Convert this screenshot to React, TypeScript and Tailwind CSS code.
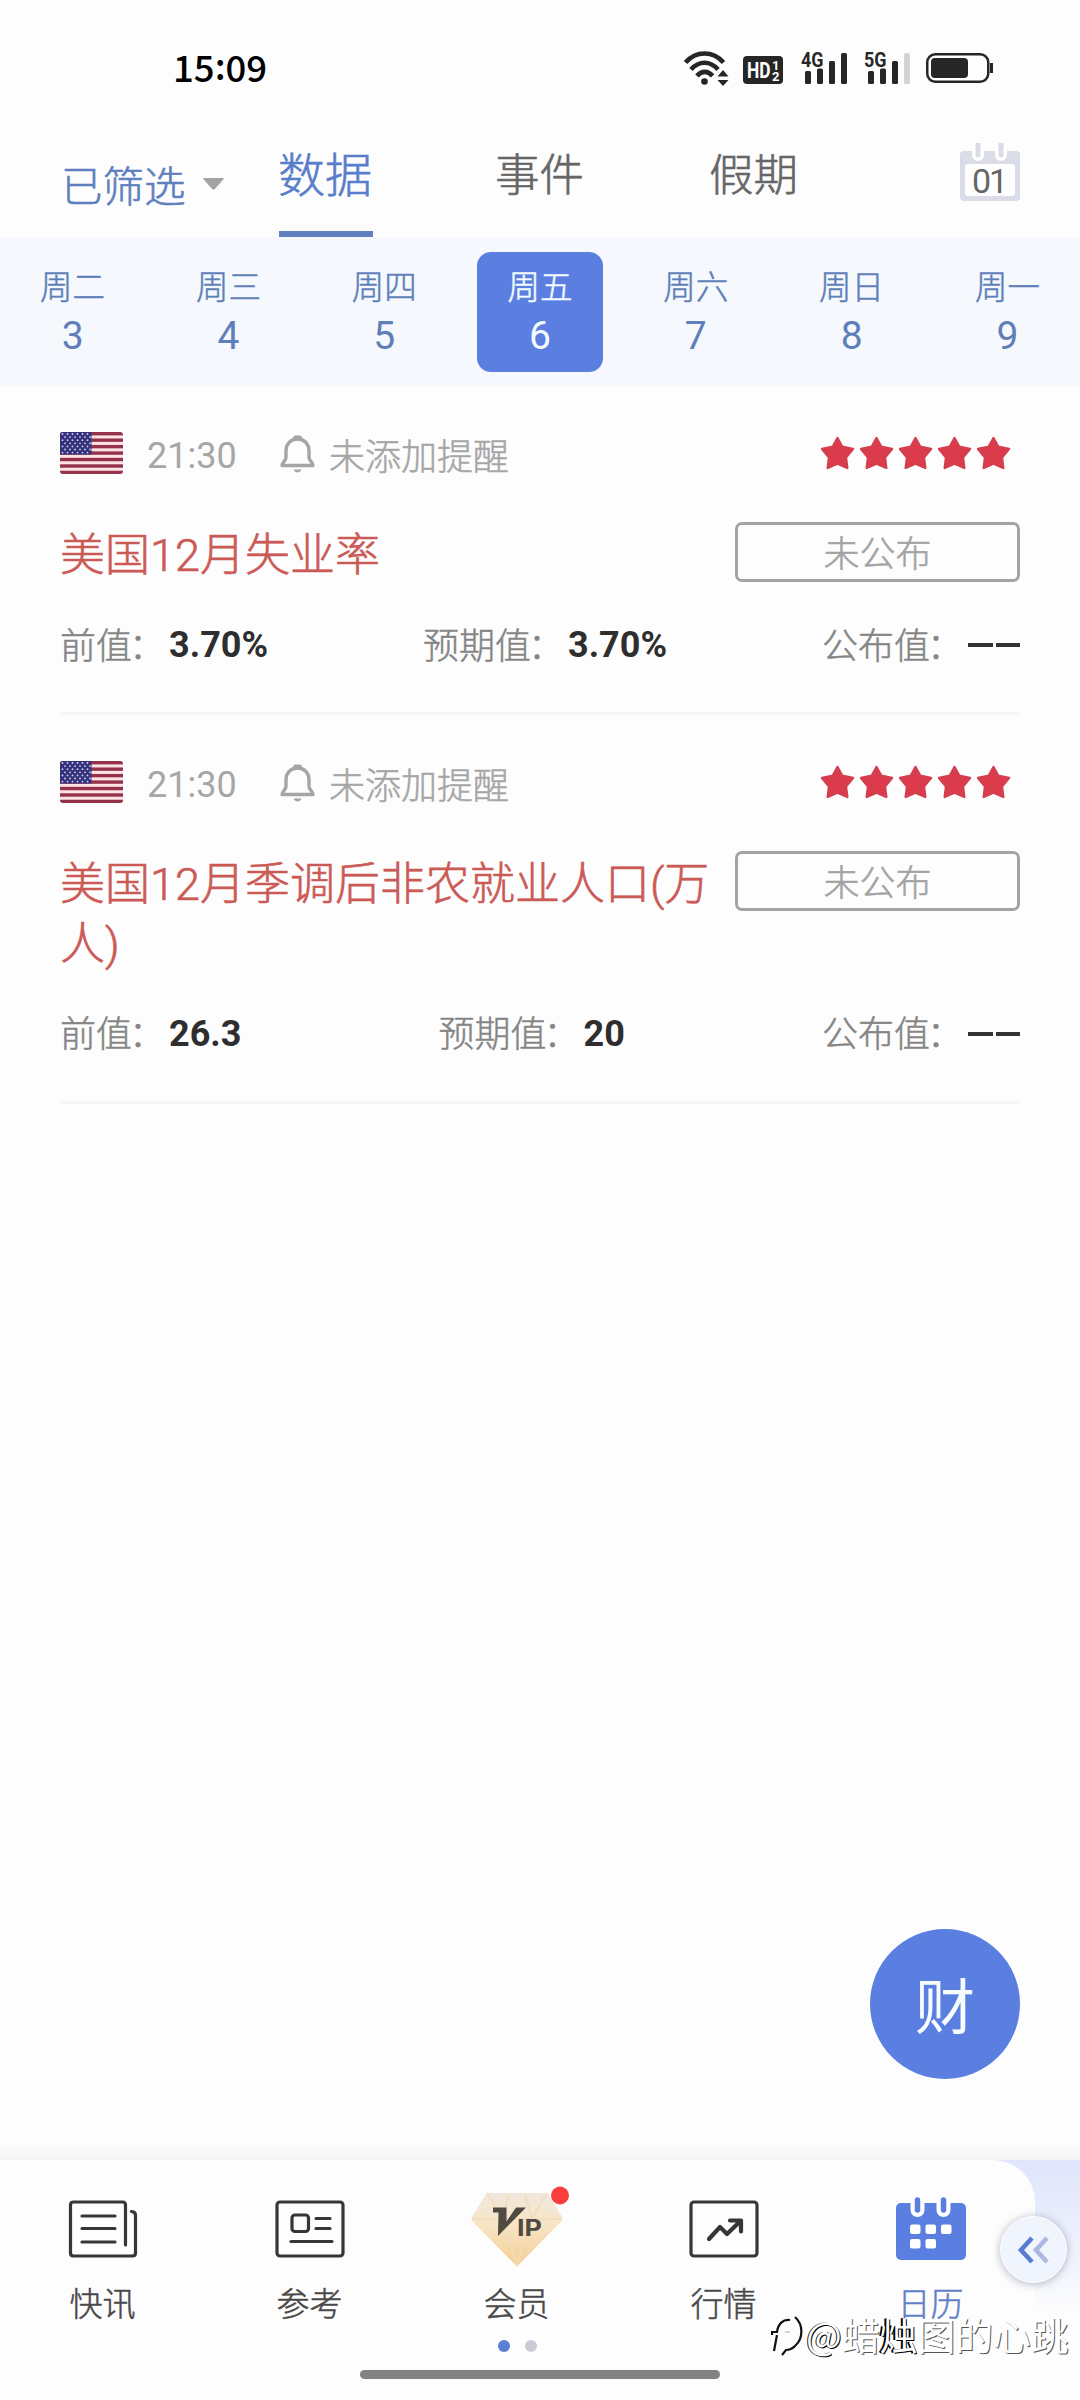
import React from "react";

const days = [
  { w: "周二", d: "3" },
  { w: "周三", d: "4" },
  { w: "周四", d: "5" },
  { w: "周五", d: "6", on: true },
  { w: "周六", d: "7" },
  { w: "周日", d: "8" },
  { w: "周一", d: "9" },
];

const events = [
  { title: "美国12月失业率", prev: "3.70%", forecast: "3.70%" },
  { title: "美国12月季调后非农就业人口(万人)", prev: "26.3", forecast: "20" },
];

function Signal({ label, weak }: { label: string; weak?: boolean }) {
  return (
    <svg className="overflow-visible" width="47" height="34" viewBox="0 0 47 34" fill="#262626">
      <text x="0" y="15.5" fontFamily="Roboto" fontWeight="700" fontSize="20.500" textLength="22.500" lengthAdjust="spacingAndGlyphs">
        {label}
      </text>
      <rect x="4" y="20" width="6" height="13" rx="1.5" />
      <rect x="16" y="17.500" width="6" height="15.500" rx="1.5" />
      <rect x="28" y="10" width="6" height="23" rx="1.5" />
      <rect x="40" y="2" width="6" height="31" rx="1.5" fill={weak ? "#d4d4d4" : "#262626"} />
    </svg>
  );
}

function StatusBar() {
  return (
    <div className="flex h-[137px] shrink-0 items-start">
      <div className="ml-[173px] mt-[46px] w-[95px] whitespace-nowrap text-[36.500px] font-medium leading-[42px] text-black">
        15<span className="relative -top-[2px]">:</span>09
      </div>
      <svg className="ml-[415px] mt-[50px]" width="46" height="36" viewBox="0 0 46 36" fill="none" stroke="#262626" strokeWidth="4.6">
        <path d="M2.5 12.5C13 .5 30 .5 40.500 12.500" />
        <path d="M8 19.500C16 10.500 27 10.500 35 19.500" />
        <path d="M14 26C18.500 20.500 25 20.500 29.500 26" />
        <circle cx="21.500" cy="31.500" r="3.300" fill="#262626" stroke="none" />
        <path d="M40 20l5.500 6.500h-11zM40 36l5.500-6h-11z" fill="#262626" stroke="none" />
      </svg>
      <svg className="ml-[14px] mt-[56px]" width="40" height="28" viewBox="0 0 40 28" fill="#fff" fontFamily="Roboto" fontWeight="700">
        <rect width="40" height="28" rx="4" fill="#262626" />
        <text x="4" y="22" fontSize="22" textLength="23.500" lengthAdjust="spacingAndGlyphs">HD</text>
        <text x="29" y="13.500" fontSize="13">1</text>
        <text x="29" y="25" fontSize="13">2</text>
      </svg>
      <div className="ml-[18px] mt-[51px]"><Signal label="4G" /></div>
      <div className="ml-[16px] mt-[51px]"><Signal label="5G" weak /></div>
      <svg className="ml-[15px] mt-[53px]" width="67" height="30" viewBox="0 0 67 30" fill="none">
        <rect x="1.250" y="1.250" width="61" height="27.500" rx="8" stroke="#262626" strokeWidth="2.500" />
        <rect x="5" y="5" width="37" height="20" rx="4" fill="#262626" />
        <path d="M65.500 10v10" stroke="#262626" strokeWidth="3" />
      </svg>
    </div>
  );
}

function Header() {
  return (
    <div className="flex h-[100px] shrink-0 items-start whitespace-nowrap font-light [-webkit-text-stroke:0.600px]">
      <div className="flex w-[279px] items-center pl-[61px] pt-[22px]">
        <span className="text-[41.500px] leading-[50px] text-[#5f80be]">已筛选</span>
        <svg className="ml-[17px]" width="21" height="12" viewBox="0 0 21 12"><path d="M1.500 0h18q2 0 .8 1.500l-8.500 9.500q-1.300 1.500-2.600 0L.7 1.500Q-.5 0 1.500 0z" fill="#a3a3a3" /></svg>
      </div>
      <div className="flex h-[100px] w-[94px] flex-col justify-between border-b-[6px] border-[#6280bd] pt-[5px] text-[47px] leading-[60px] text-[#587dca]"><span className="-ml-px">数据</span></div>
      <div className="ml-[122px] w-[89px] pt-[5px] text-[44.500px] leading-[60px] text-[#666]">事件</div>
      <div className="ml-[125px] w-[89px] pt-[5px] text-[44.500px] leading-[60px] text-[#666]">假期</div>
      <svg className="ml-[161px] mt-[6px] [-webkit-text-stroke:0]" width="62" height="60" viewBox="0 0 62 60">
        <rect x="1" y="8" width="60" height="50" rx="4" fill="#dadde8" />
        <rect x="6" y="21" width="50" height="32" rx="3" fill="#fff" />
        <path d="M19 1v11M42 1v11" stroke="#fff" strokeWidth="12" strokeLinecap="round" />
        <path d="M19 1v11M42 1v11" stroke="#dadbe4" strokeWidth="5" strokeLinecap="round" />
        <text x="31" y="50" textAnchor="middle" fontFamily="Roboto" fontWeight="400" fontSize="34" textLength="36" fill="#666">01</text>
      </svg>
    </div>
  );
}

function Flag() {
  return (
    <svg className="rounded-[3px]" width="63" height="42" viewBox="0 0 63 42">
      <rect width="63" height="42" fill="#fbe3e6" />
      {[0, 1, 2, 3, 4, 5, 6].map((i) => (
        <rect key={i} y={i * 6.46} width="63" height="3.400" fill="#95324a" />
      ))}
      <rect width="31.500" height="22.500" fill="#34327c" />
      {[0, 1, 2, 3, 4, 5, 6].map((r) =>
        [0, 1, 2, 3, 4, 5].map((c) => (
          <circle key={`${r}-${c}`} cx={2.500 + c * 5 + (r % 2) * 2.500} cy={2 + r * 3.100} r=".9" fill="#d4d3ea" />
        ))
      )}
    </svg>
  );
}

function Value({ label, value }: { label: string; value: string }) {
  return (
    <div className="flex items-center text-[36px] leading-[42px]">
      <span className="-mt-[3px] font-light text-[#858585] [-webkit-text-stroke:0.500px]">
        {label}
        <span className="relative -left-[3px]">：</span>
      </span>
      {value ? (
        <span className="ml-px mt-[2px] font-[Roboto] font-bold text-[#2e2e2e]">{value}</span>
      ) : (
        <span className="ml-[2px] mt-[2px] flex h-[4px] w-[52px] gap-[3px]" aria-label="--">
          <i className="flex-1 bg-[#333]" />
          <i className="flex-1 bg-[#333]" />
        </span>
      )}
    </div>
  );
}

function EventCard({ title, prev, forecast }: { title: string; prev: string; forecast: string }) {
  return (
    <div className="mx-[60px] border-b-[3px] border-[#f5f5f5] pb-[47px] pt-[46px]">
      <div className="flex h-[42px] items-center text-[36px] leading-[42px] text-[#a6a6a6]">
        <Flag />
        <span className="ml-[24px] mt-[5px] w-[91px] font-[Roboto]">21:30</span>
        <svg className="ml-[42px] mt-[2px]" width="35" height="38" viewBox="0 0 35 38" fill="none" stroke="#a5a5a5" strokeWidth="3.400" strokeLinejoin="round">
          <path d="M17.500 4C10.500 4 6 9 6 16v6.500c0 3-4 5-4 8h31c0-3-4-5-4-8V16C29 9 24.500 4 17.500 4z" />
          <path d="M15 2.200h5" strokeLinecap="round" />
          <path d="M13.500 34.500c1.500 4 6.500 4 8 0z" fill="#a5a5a5" stroke="none" />
        </svg>
        <span className="ml-[14px] mt-[1px] font-light [-webkit-text-stroke:0.500px]">未添加提醒</span>
        <div className="ml-auto mr-[9px] flex gap-[5px]">
          {[0, 1, 2, 3, 4].map((i) => (
            <svg key={i} width="34" height="34" viewBox="0 0 34 34">
              <path d="M16.500 2l4.700 8.600 10.800 2.400-7 8.400 1.300 10.600-9.800-4.400-9.800 4.400L8 21.400 1 13l10.800-2.400z" fill="#dc3b4b" stroke="#d43f50" strokeWidth="2.400" strokeLinejoin="round" />
            </svg>
          ))}
        </div>
      </div>
      <div className="mt-[48px] flex items-start justify-between">
        <div className="w-[660px] break-all pt-[4px] font-[Roboto,'Noto_Sans_CJK_SC',sans-serif] text-[45px] font-light leading-[59.500px] text-[#cb5a56] [-webkit-text-stroke:0.600px]">{title}</div>
        <div className="h-[60px] w-[285px] rounded-[7px] border-[3px] border-[#a3a3a3] text-center text-[36px] font-light leading-[53px] text-[#a3a3a3] [-webkit-text-stroke:0.500px]">未公布</div>
      </div>
      <div className="mt-[37.500px] flex h-[42px] items-center justify-between">
        <Value label="前值" value={prev} />
        <Value label="预期值" value={forecast} />
        <Value label="公布值" value="" />
      </div>
    </div>
  );
}

function NavItem({ label, active, children }: { label: string; active?: boolean; children: React.ReactNode }) {
  return (
    <div className="flex w-[207px] flex-col items-center">
      <div className="flex h-[76px] items-center justify-center">{children}</div>
      <span className={active ? "mt-[11px] text-[33px] leading-[48px] text-[#5f80c8] [-webkit-text-stroke:0.500px]" : "mt-[11px] text-[33px] leading-[48px] text-[#484848] [-webkit-text-stroke:0.500px]"}>{label}</span>
    </div>
  );
}

function BottomNav() {
  return (
    <div className="relative h-[240px] shrink-0 bg-gradient-to-b from-[#dfe5fb] via-[#f0f3fd] via-40% to-[#fdfdfd] to-65%">
      <div className="h-[240px] w-[1035px] rounded-tr-[42px] bg-[#fdfdfd] pt-[31px]">
        <div className="-ml-px flex font-light">
          <NavItem label="快讯">
            <svg width="70" height="58" viewBox="0 0 70 58" fill="none" stroke="#363636" strokeWidth="3.200" strokeLinecap="round" strokeLinejoin="round">
              <path d="M57.500 45V5q0-3-3-3h-49q-3 0-3 3v48q0 3 3 3h59q3 0 3-3V15q0-3-4-3.500" />
              <path d="M14 16h33M14 28.500h33M14 42h33" />
            </svg>
          </NavItem>
          <NavItem label="参考">
            <svg width="70" height="58" viewBox="0 0 70 58" fill="none" stroke="#363636" strokeWidth="3.200" strokeLinecap="round">
              <rect x="2" y="2" width="66" height="54" rx="3" />
              <rect x="17" y="15" width="16.500" height="16.500" rx="3" />
              <path d="M41 18.500h14M41 28.500h14M16 41.500h41" />
            </svg>
          </NavItem>
          <NavItem label="会员">
            <svg className="overflow-visible" width="92" height="76" viewBox="0 0 92 76">
              <defs>
                <linearGradient id="gem" x1="0" y1="0" x2="0" y2="1">
                  <stop offset="0" stopColor="#f0e8de" />
                  <stop offset=".4" stopColor="#f7e5c8" />
                  <stop offset="1" stopColor="#f5cf92" />
                </linearGradient>
              </defs>
              <path d="M18 2h57q2 0 3 2l13 22q1 2-.5 4L47 74.500q-1 1-2 0L1.200 30Q0 28 1 26L14.500 4Q16 2 18 2z" fill="url(#gem)" />
              <path d="M1 28h90M16 2l15 26 15 46 15-46L76 2M31 28L38 3M61 28L54 3" stroke="#f3dcb8" strokeWidth="2" fill="none" opacity=".8" />
              <path d="M22 16.500h13.500v14L45 16.500h10L27 45l.5-23.500H22z" fill="#504a42" />
              <text x="46" y="45" fontFamily="Inter" fontWeight="700" fontSize="23" textLength="25" lengthAdjust="spacingAndGlyphs" fill="#504a42">IP</text>
              <circle cx="89" cy="4.500" r="9" fill="#fa3e3d" />
            </svg>
          </NavItem>
          <NavItem label="行情">
            <svg width="70" height="58" viewBox="0 0 70 58" fill="none" stroke="#363636" strokeLinecap="round" strokeLinejoin="round">
              <rect x="2" y="2" width="66" height="54" rx="3" strokeWidth="3.200" />
              <path d="M20 39l11-12 7 7 13.500-13M41 20.500h11v11" strokeWidth="4.200" />
            </svg>
          </NavItem>
          <NavItem label="日历" active>
            <svg className="ml-px" width="70" height="64" viewBox="0 0 70 64">
              <rect y="6" width="70" height="57" rx="5" fill="#5a7fe0" />
              <path d="M21.500 4v9M47.500 4v9" stroke="#fff" strokeWidth="14" strokeLinecap="round" />
              <path d="M21.500 3v10M47.500 3v10" stroke="#5a7fe0" strokeWidth="5.500" strokeLinecap="round" />
              {[14, 29.5, 45].map((x) => <rect key={x} x={x} y="27.500" width="10.500" height="9.500" rx="2" fill="#fff" />)}
              {[14, 29.5].map((x) => <rect key={x} x={x} y="42" width="10.500" height="9.500" rx="2" fill="#fff" />)}
            </svg>
          </NavItem>
        </div>
        <div className="ml-[498px] mt-[14px] flex gap-[15px]">
          <i className="h-3 w-3 rounded-full bg-[#5a7fd6]" />
          <i className="h-3 w-3 rounded-full bg-[#cbcad6]" />
        </div>
        <div className="ml-[360px] mt-[18px] h-[9px] w-[360px] rounded-full bg-[#828282]" />
      </div>

      <div className="absolute left-[1000px] top-[56px] flex h-[67px] w-[67px] items-center justify-center rounded-full border border-white bg-[#f0f4fc] shadow-[0_1px_8px_rgba(90,95,125,0.45)]">
        <svg className="-ml-[2px]" width="32" height="28" viewBox="0 0 32 28" fill="none" strokeWidth="4.600">
          <path d="M15 2L4 14l11 12" stroke="#587dd2" />
          <path d="M30 2L19 14l11 12" stroke="#aab8e2" />
        </svg>
      </div>

      <div className="absolute left-[771px] top-[147px] flex items-center whitespace-nowrap text-[37.800px] font-normal leading-[54px] text-white [text-shadow:1px_1px_0_#555]">
        <svg className="mt-[4px]" width="35" height="42" viewBox="0 0 35 42" fill="none" stroke="#111" strokeWidth="2.200">
          <path d="M3 36l3-16M1 20v-3h5C7 9 12 4 19 5" />
          <path d="M24 2c8 7 9 21 0 29-3 3-6 4-9 4l-4 5" />
          <path d="M14 17h5" stroke="#aaa" strokeWidth="1" />
        </svg>
        <span className="[text-shadow:1px_1px_0_#000,-1px_0_0_#222]">@</span>
        <span>蜡</span>
        <span className="[text-shadow:-2px_0_0_#000,1px_1px_0_#000]">烛</span>
        <span>图的心跳</span>
      </div>
    </div>
  );
}

export default function App() {
  return (
    <div className="flex h-[2400px] w-[1080px] flex-col overflow-hidden bg-[#fdfdfd] font-['Noto_Sans_CJK_SC',sans-serif]">
      <StatusBar />
      <Header />
      <div className="flex h-[149px] shrink-0 justify-center bg-[#f5f9fe] pt-[15px]">
        {days.map(({ w, d, on }) => (
          <div key={w} className="flex w-[155.800px] shrink-0 justify-center">
            <div className={on ? "flex h-[120px] w-[126px] flex-col items-center rounded-[14px] bg-[#5a7fe0] pt-[10px] text-[#f4fbff]" : "flex h-[120px] w-[126px] flex-col items-center pt-[10px] text-[#5f7fb8]"}>
              <span className="text-[32.500px] font-light leading-[46px] [-webkit-text-stroke:0.500px]">{w}</span>
              <span className="mt-[5px] font-[Roboto] text-[39px] leading-[46px]">{d}</span>
            </div>
          </div>
        ))}
      </div>
      <main className="grow">
        {events.map((e) => <EventCard key={e.title} {...e} />)}
      </main>
      <div className="mb-[63px] mr-[60px] flex h-[150px] w-[150px] shrink-0 items-center justify-center self-end rounded-full bg-[#5a7fe0] text-[60px] leading-[60px] text-[#f7fdff]"><span className="-mt-[3px]">财</span></div>
      <div className="h-[18px] shrink-0 bg-gradient-to-b from-[#fdfdfd] to-[#f5f5f5]" />
      <BottomNav />
    </div>
  );
}
